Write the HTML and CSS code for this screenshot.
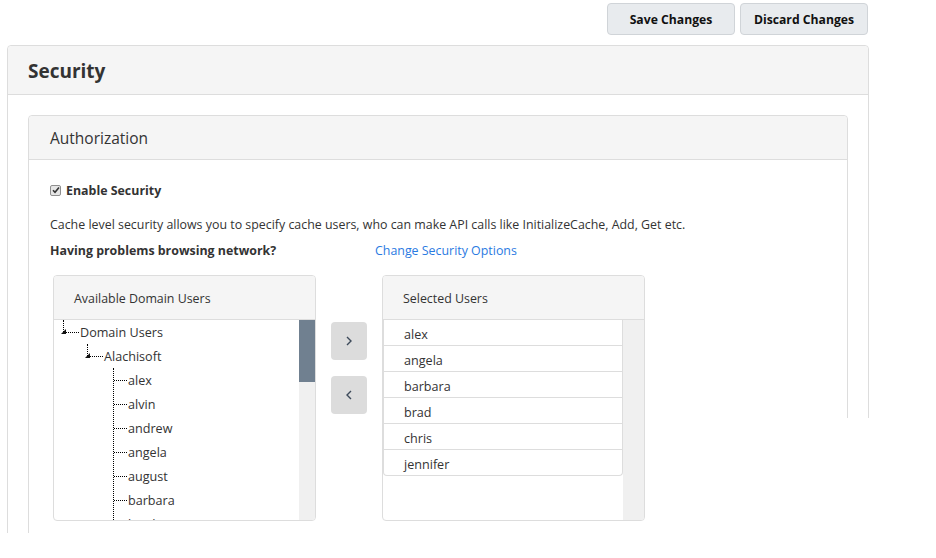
FILE: index.html
```html
<!DOCTYPE html>
<html>
<head>
<meta charset="utf-8">
<link rel="stylesheet" href="styles.css">
</head>
<body>
<div class="page">
  <div class="actions">
    <button class="btn">Save Changes</button>
    <button class="btn">Discard Changes</button>
  </div>
  <div class="panel outer">
    <div class="panel-head outer-head"><h1>Security</h1></div>
    <div class="outer-body">
      <div class="panel inner">
        <div class="panel-head inner-head"><h2>Authorization</h2></div>
        <div class="inner-body">
          <label class="check"><span class="box"><svg width="8" height="8" viewBox="0 0 8 8"><path d="M1 4.2 L3 6.3 L7 1.5" fill="none" stroke="#333" stroke-width="1.6"/></svg></span>Enable Security</label>
          <p class="desc">Cache level security allows you to specify cache users, who can make API calls like InitializeCache, Add, Get etc.</p>
          <div class="problems"><b>Having problems browsing network?</b><a class="link">Change Security Options</a></div>
          <div class="dual">
            <div class="lbox">
              <div class="lhead">Available Domain Users</div>
              <div class="lbody">
                <div class="tree">
                  <div class="node n1"><span class="tri"></span><span class="hl"></span>Domain Users</div>
                  <div class="node n2"><span class="tri"></span><span class="hl"></span>Alachisoft</div>
                  <ul class="leaves">
                    <li>alex</li><li>alvin</li><li>andrew</li><li>angela</li><li>august</li><li>barbara</li><li>brad</li>
                  </ul>
                </div>
                <div class="scroll"><div class="thumb"></div></div>
              </div>
            </div>
            <div class="moves">
              <button class="mv"><svg width="8" height="12" viewBox="0 0 8 12"><path d="M2 2 L6 6 L2 10" fill="none" stroke="#3d4a5a" stroke-width="1.4"/></svg></button>
              <button class="mv"><svg width="8" height="12" viewBox="0 0 8 12"><path d="M6 2 L2 6 L6 10" fill="none" stroke="#3d4a5a" stroke-width="1.4"/></svg></button>
            </div>
            <div class="lbox">
              <div class="lhead">Selected Users</div>
              <div class="lbody">
                <ul class="sel">
                  <li>alex</li><li>angela</li><li>barbara</li><li>brad</li><li>chris</li><li>jennifer</li>
                </ul>
                <div class="track"></div>
              </div>
            </div>
          </div>
        </div>
      </div>
    </div>
  </div>
  <div class="mask"></div>
</div>
</body>
</html>
```
FILE: styles.css
```css
html, body { margin: 0; padding: 0; background: #fff; }
body { font-family: "Open Sans", "Noto Sans", sans-serif; font-size: 12.4px; color: #333; }
.page { position: relative; height: 533px; overflow: hidden; }
.actions { display: flex; justify-content: flex-end; gap: 5px; padding: 3px 68px 0 0; }
.btn { width: 128px; height: 32px; background: #e8ebee; border: 1px solid #d0d4d8; border-radius: 4px; font: 700 12.2px "Open Sans", sans-serif; color: #111; padding: 0; }
.panel { border: 1px solid #ddd; border-radius: 4px; background: #fff; }
.outer { margin: 10px 67px 0 7px; }
.panel-head { background: #f5f5f5; border-bottom: 1px solid #ddd; border-radius: 4px 4px 0 0; display: flex; align-items: center; }
.outer-head { height: 48px; padding-left: 20px; }
h1 { margin: 0 0 0 0; padding-top: 2px; font-size: 19px; font-weight: 700; color: #333; }
.outer-body { padding: 20px 20px 0 20px; }
.inner-head { height: 43px; padding-left: 21px; }
h2 { margin: 0; font-size: 15.5px; font-weight: 400; color: #333; }
.inner-body { padding: 22px 21px 40px 21px; }
.check { display: flex; align-items: center; font-weight: 700; height: 16px; }
.box { width: 9px; height: 9px; border: 1px solid #8f8f8f; border-radius: 2px; background: #e6e6e6; margin-right: 5px; display: flex; align-items: center; justify-content: center; }
.desc { margin: 18px 0 0 0; line-height: 18px; }
.problems { display: flex; margin-top: 8px; line-height: 18px; }
.problems b { width: 325px; }
.link { color: #2a7ae2; }
.dual { display: flex; margin: 15px 0 0 3px; align-items: flex-start; }
.lbox { width: 261px; border: 1px solid #ddd; border-radius: 4px; overflow: hidden; }
.lhead { height: 42px; padding-top: 1px; background: #f5f5f5; border-bottom: 1px solid #ddd; display: flex; align-items: center; padding-left: 20px; }
.lbody { display: flex; height: 200px; }
.tree { flex: 1; position: relative; font-size: 12.6px; }
.scroll { width: 16px; background: #f0f0f0; }
.thumb { height: 62px; background: #708090; }
.node { position: relative; height: 24px; display: flex; align-items: center; }
.n1 { padding-left: 26px; }
.n2 { padding-left: 50px; }
.node::before { content: ""; position: absolute; top: 0; height: 12px; border-left: 1px dotted #000; }
.n1::before { left: 9px; }
.n2::before { left: 33px; }
.tri { position: absolute; top: 9px; width: 0; height: 0; border-left: 5px solid transparent; border-bottom: 5px solid #111; }
.n1 .tri { left: 7px; }
.n2 .tri { left: 31px; }
.hl { position: absolute; top: 12px; width: 13px; border-top: 1px dotted #000; }
.n1 .hl { left: 12px; }
.n2 .hl { left: 36px; }
.leaves { list-style: none; margin: 0 0 0 59px; padding: 0; border-left: 1px dotted #000; }
.leaves li { height: 24px; display: flex; align-items: center; }
.leaves li::before { content: ""; width: 13px; border-top: 1px dotted #000; margin-right: 1px; }
.moves { display: flex; flex-direction: column; gap: 16px; margin: 47px 15px 0 15px; }
.mv { width: 36px; height: 38px; border: none; background: #dcdcdc; border-radius: 4px; padding: 0; display: flex; align-items: center; justify-content: center; }
.sel { list-style: none; margin: 0; padding: 0; width: 238px; align-self: flex-start; border: 1px solid #ddd; border-top: none; border-radius: 0 0 4px 4px; font-size: 12.6px; }
.sel li { height: 22px; padding-top: 3px; line-height: 24px; padding-left: 20px; border-bottom: 1px solid #ddd; }
.sel li:last-child { border-bottom: none; }
.track { flex: 1; background: #f0f0f0; }
.mask { position: absolute; left: 650px; top: 418px; right: 0; bottom: 0; background: #fff; }
```
